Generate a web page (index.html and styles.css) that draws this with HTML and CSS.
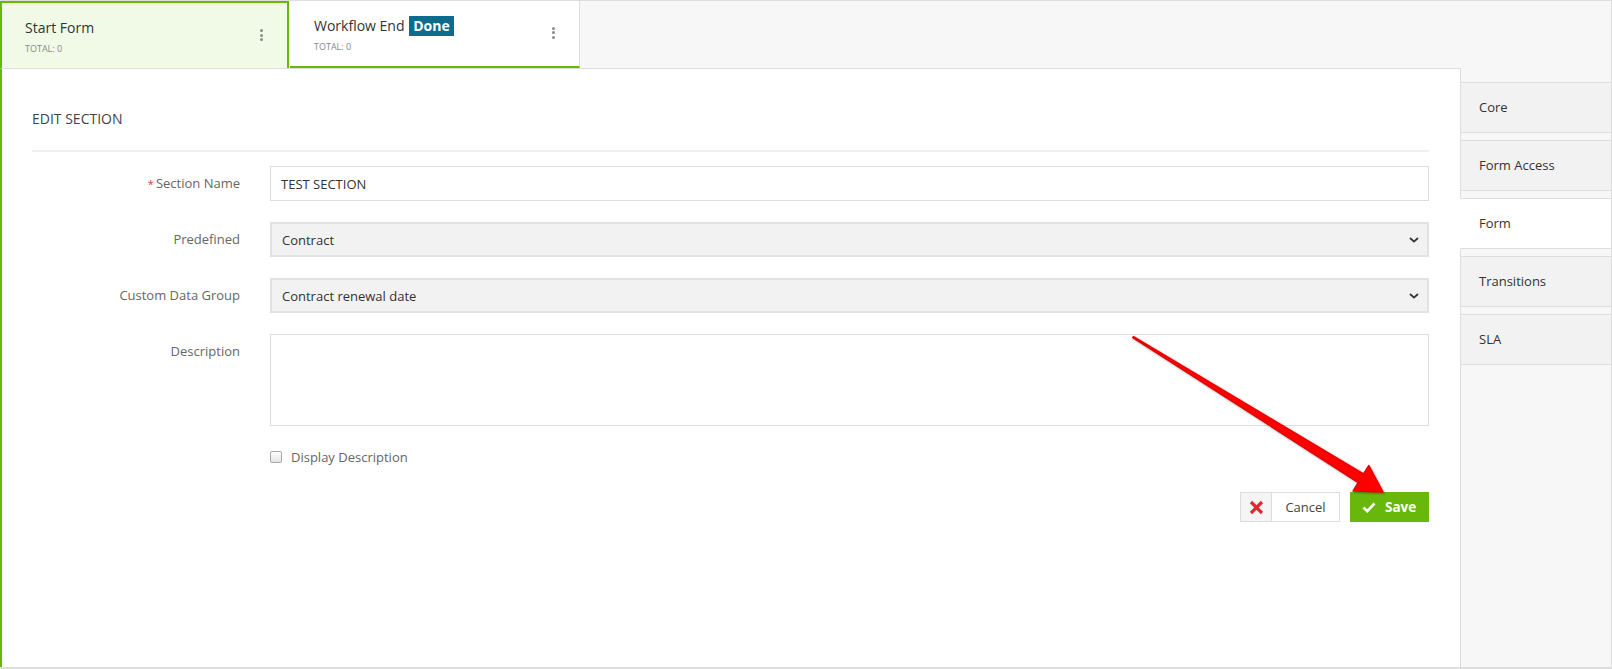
FILE: index.html
```html
<!DOCTYPE html>
<html lang="en">
<head>
  <meta charset="UTF-8" />
  <title>Edit Section</title>
  <link rel="stylesheet" href="styles.css">
</head>
<body>
  <div class="board">
    <div class="tabs">
      <div class="tab tab-start">
        <div class="tab-text">
          <div class="tab-title">Start Form</div>
          <div class="tab-total">TOTAL: 0</div>
        </div>
        <span class="kebab"><i></i><i></i><i></i></span>
      </div>
      <div class="tab tab-end">
        <div class="tab-text">
          <div class="tab-title">Workflow End <span class="badge">Done</span></div>
          <div class="tab-total">TOTAL: 0</div>
        </div>
        <span class="kebab"><i></i><i></i><i></i></span>
      </div>
    </div>

    <div class="content">
      <main class="panel">
        <h2 class="panel-title">EDIT SECTION</h2>

        <div class="row">
          <label class="lbl"><span class="req">*</span>Section Name</label>
          <input class="field" type="text" value="TEST SECTION">
        </div>

        <div class="row">
          <label class="lbl">Predefined</label>
          <div class="select">
            <span>Contract</span>
            <svg width="10" height="6" viewBox="0 0 10 6"><path d="M1 1l4 3.6L9 1" fill="none" stroke="#333" stroke-width="1.8"/></svg>
          </div>
        </div>

        <div class="row">
          <label class="lbl">Custom Data Group</label>
          <div class="select">
            <span>Contract renewal date</span>
            <svg width="10" height="6" viewBox="0 0 10 6"><path d="M1 1l4 3.6L9 1" fill="none" stroke="#333" stroke-width="1.8"/></svg>
          </div>
        </div>

        <div class="row">
          <label class="lbl">Description</label>
          <textarea class="field area"></textarea>
        </div>

        <div class="check-row">
          <span class="checkbox"></span>
          <span>Display Description</span>
        </div>

        <div class="actions">
          <button class="btn-cancel">
            <span class="x-box">
              <svg width="15" height="15" viewBox="0 0 15 15"><path d="M2 2l11 11M13 2L2 13" stroke="#e5262d" stroke-width="3.2"/></svg>
            </span>
            <span class="cancel-text">Cancel</span>
          </button>
          <button class="btn-save">
            <svg width="14" height="11" viewBox="0 0 14 11"><path d="M1.5 5.5l3.8 3.6L12.5 1.5" fill="none" stroke="#fff" stroke-width="2.6"/></svg>
            Save
          </button>
        </div>
      </main>

      <nav class="side">
        <div class="side-item">Core</div>
        <div class="side-item">Form Access</div>
        <div class="side-item active">Form</div>
        <div class="side-item">Transitions</div>
        <div class="side-item">SLA</div>
      </nav>
    </div>
  </div>

  <svg class="arrow" width="1612" height="669" viewBox="0 0 1612 669">
    <polygon points="1133.5,336.6 1363.5,474 1368.8,465.6 1383,492 1353,491.1 1358.3,482.5 1132.8,337.5"
      fill="#f00" stroke="#e80000" stroke-width="1.5" stroke-linejoin="round"/>
  </svg>
</body>
</html>
```

FILE: styles.css
```css
body {
  margin: 0;
  font-family: "Open Sans", Arial, sans-serif;
  color: #333;
}
.board {
  box-sizing: border-box;
  width: 1612px;
  height: 669px;
  background-color: #f7f7f7;
  border-top: 1px solid #ddd;
  border-right: 1px solid #ddd;
  border-bottom: 2px solid #ddd;
  display: flex;
  flex-direction: column;
}
.tabs {
  display: flex;
  height: 67px;
}
.tab {
  box-sizing: border-box;
  display: flex;
  align-items: center;
  justify-content: space-between;
}
.tab-start {
  width: 289px;
  background-color: #f1fae6;
  border: 2px solid #67b80b;
  border-bottom: 0;
  padding: 0 24px 0 23px;
}
.tab-end {
  width: 290px;
  margin-left: 1px;
  background-color: #fff;
  border-right: 1px solid #ddd;
  border-bottom: 2px solid #67b80b;
  padding: 0 24px 0 24px;
}
.tab-text {
  align-self: flex-start;
  padding-top: 15px;
}
.tab-title {
  font-size: 14px;
  line-height: 20px;
  color: #333;
}
.tab-total {
  margin-top: 5px;
  font-size: 9px;
  line-height: 12px;
  color: #888;
}
.badge {
  display: inline-block;
  margin-left: 1px;
  padding: 0 4px;
  background-color: #0c6c8c;
  color: #fff;
  font-weight: bold;
}
.kebab {
  display: flex;
  flex-direction: column;
  gap: 1.5px;
}
.kebab i {
  display: block;
  width: 3px;
  height: 3px;
  border-radius: 50%;
  background-color: #8a8a8a;
}
.tab-start .kebab {
  margin-top: -1px;
}
.tab-end .kebab {
  margin-top: -2px;
}
.content {
  flex: 1;
  display: flex;
}
.panel {
  box-sizing: border-box;
  width: 1460px;
  background-color: #fff;
  border-left: 2px solid #67b80b;
  border-top: 1px solid #ddd;
  padding: 40px 31px 0 30px;
}
.panel-title {
  margin: 0;
  font-size: 14px;
  line-height: 20px;
  font-weight: normal;
  color: #444;
  padding-bottom: 21px;
  border-bottom: 2px solid #f0f0f0;
  margin-bottom: 14px;
}
.row {
  display: grid;
  grid-template-columns: 208px 1fr;
  column-gap: 30px;
  margin-bottom: 21px;
}
.lbl {
  text-align: right;
  font-size: 13px;
  line-height: 35px;
  color: #666;
}
.req {
  color: #e33;
  font-size: 11px;
  margin-right: 2px;
}
.field {
  box-sizing: border-box;
  height: 35px;
  border: 1px solid #ddd;
  padding: 0 10px;
  font-family: inherit;
  font-size: 13px;
  color: #333;
  outline: none;
}
.area {
  height: 92px;
  resize: none;
}
.select {
  box-sizing: border-box;
  height: 35px;
  display: flex;
  align-items: center;
  justify-content: space-between;
  background-color: #f2f2f2;
  border: 2px solid #e2e2e2;
  padding: 0 8px 0 10px;
  font-size: 13px;
  color: #333;
}
.check-row {
  display: flex;
  align-items: center;
  gap: 9px;
  height: 20px;
  margin: 2px 0 0 238px;
  font-size: 13px;
  color: #666;
}
.checkbox {
  box-sizing: border-box;
  width: 12px;
  height: 12px;
  border: 1px solid #a9a9a9;
  border-radius: 2px;
  background: linear-gradient(#fdfdfd, #e6e6e6);
}
.actions {
  display: flex;
  justify-content: flex-end;
  gap: 10px;
  margin-top: 25px;
}
.btn-cancel {
  box-sizing: border-box;
  display: flex;
  width: 100px;
  height: 30px;
  padding: 0;
  background-color: #fff;
  border: 1px solid #ddd;
  font-family: inherit;
  cursor: pointer;
}
.x-box {
  width: 30px;
  height: 100%;
  display: flex;
  align-items: center;
  justify-content: center;
  background-color: #f5f5f5;
  border-right: 1px solid #ddd;
}
.cancel-text {
  flex: 1;
  line-height: 28px;
  font-size: 13px;
  color: #444;
}
.btn-save {
  box-sizing: border-box;
  display: flex;
  align-items: center;
  gap: 9px;
  width: 79px;
  height: 30px;
  padding: 0 0 0 12px;
  background-color: #67b80b;
  border: none;
  color: #fff;
  font-family: inherit;
  font-size: 13.5px;
  font-weight: bold;
  cursor: pointer;
}
.side {
  flex: 1;
  border-left: 1px solid #ddd;
  padding-top: 14px;
}
.side-item {
  box-sizing: border-box;
  height: 51px;
  margin-bottom: 7px;
  padding-left: 18px;
  background-color: #f2f2f2;
  border-top: 1px solid #ddd;
  border-bottom: 1px solid #ddd;
  font-size: 13px;
  line-height: 49px;
  color: #333;
}
.side-item.active {
  margin-left: -1px;
  padding-left: 18px;
  background-color: #fff;
  border-left: 1px solid #fff;
}
.arrow {
  position: absolute;
  top: 0;
  left: 0;
  pointer-events: none;
  filter: drop-shadow(1px 1px 1px rgba(0, 0, 0, 0.35));
}
```
